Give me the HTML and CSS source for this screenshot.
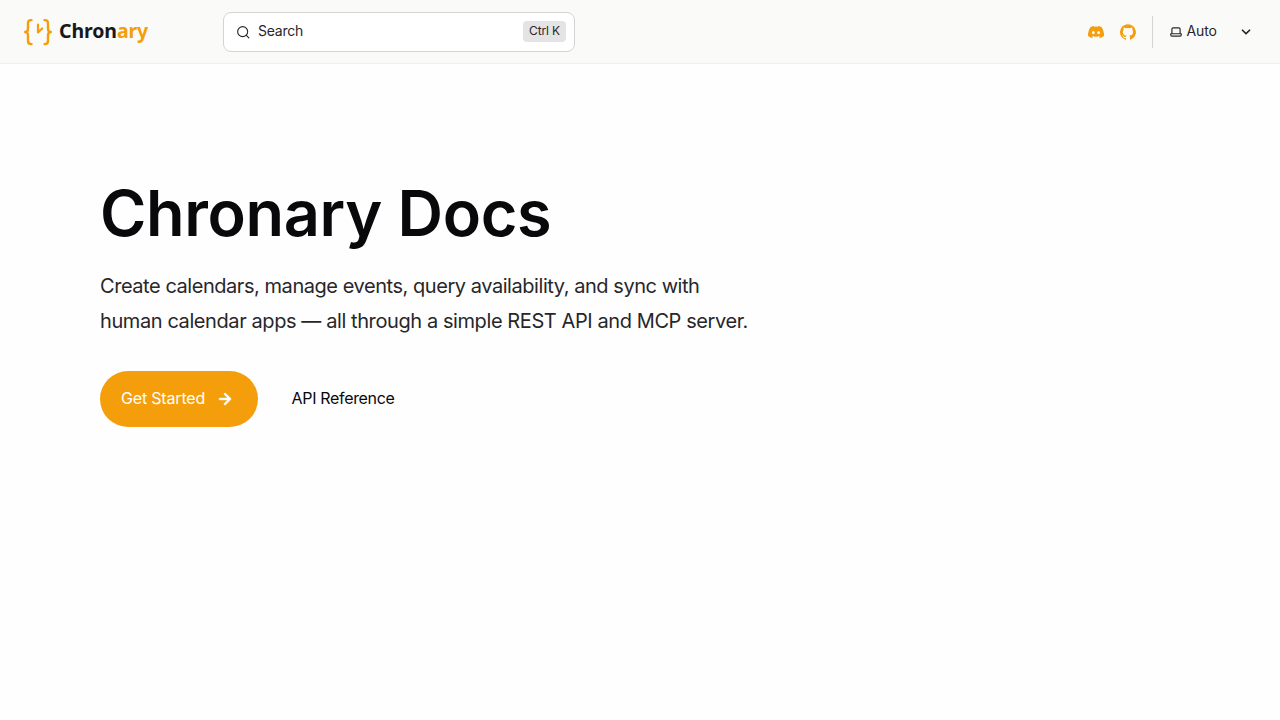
FILE: index.html
```html
<!DOCTYPE html>
<html lang="en">
<head>
    <meta charset="UTF-8">
    <meta name="viewport" content="width=device-width, initial-scale=1.0">
    <title>Chronary Docs</title>
    <link rel="stylesheet" href="styles.css">
</head>
<body>
    <header class="header">
        <a class="site-title" href="#">
            <svg class="logo" width="28" height="28" viewBox="0 0 28 28" fill="none" stroke="currentColor" stroke-width="2.4" stroke-linecap="round" stroke-linejoin="round">
                <path d="M7.500 2.100H7C4.900 2.100 4 3.300 4 5.200v5.300c0 2-.9 3.500-2.900 3.500 2 0 2.900 1.500 2.900 3.500v5.300C4 24.700 4.900 26.100 7 26.100h.5"/>
                <path d="M20.500 2.100h.5c2.100 0 3 1.200 3 3.100v5.300c0 2 .9 3.500 2.900 3.500-2 0-2.900 1.500-2.900 3.500v5.300c0 1.900-.9 3.300-3 3.300h-.5"/>
                <path d="M14 6.500v8l4.200-4" stroke-width="2.200"/>
            </svg>
            <span class="wordmark">Chron<span>ary</span></span>
        </a>

        <button class="search">
            <svg width="16" height="16" viewBox="0 0 24 24" fill="none" stroke="currentColor" stroke-width="1.700" stroke-linecap="round"><circle cx="11.500" cy="11.500" r="7.500"/><path d="m17 17 3.800 3.800"/></svg>
            <span class="search-label">Search</span>
            <kbd>Ctrl K</kbd>
        </button>

        <div class="right-group">
            <div class="social">
                <a href="#" aria-label="Discord">
                    <svg width="16" height="16" viewBox="0 0 24 24" fill="currentColor"><path d="M20.320 4.370a19.800 19.800 0 0 0-4.930-1.510 13.780 13.780 0 0 0-.64 1.280 18.270 18.270 0 0 0-5.500 0 12.640 12.640 0 0 0-.64-1.280A19.740 19.740 0 0 0 3.640 4.400 20.260 20.260 0 0 0 .11 18.090a19.900 19.900 0 0 0 6.060 3.050 14.240 14.240 0 0 0 1.270-2.050 13.100 13.100 0 0 1-1.930-1l.45-.38a14.200 14.200 0 0 0 12.120 0l.45.38a12.290 12.290 0 0 1-1.930 1c.36.7.78 1.400 1.250 2.050a19.840 19.840 0 0 0 6.070-3.050 20.100 20.100 0 0 0-3.600-13.720ZM8.020 15.330c-1.180 0-2.160-1.080-2.160-2.420s.96-2.420 2.160-2.420c1.210 0 2.180 1.100 2.160 2.420 0 1.340-.96 2.420-2.160 2.420Zm7.980 0c-1.190 0-2.160-1.080-2.160-2.420s.95-2.420 2.160-2.420 2.180 1.100 2.160 2.420c0 1.340-.95 2.420-2.160 2.420Z"/></svg>
                </a>
                <a href="#" aria-label="GitHub">
                    <svg width="16" height="16" viewBox="0 0 24 24" fill="currentColor"><path d="M12 .3a12 12 0 0 0-3.800 23.380c.6.12.83-.26.83-.57L9 21.070c-3.340.72-4.040-1.610-4.040-1.610-.55-1.390-1.340-1.760-1.340-1.760-1.080-.74.09-.73.09-.73 1.200.09 1.830 1.240 1.830 1.240 1.080 1.830 2.810 1.300 3.500 1 .1-.78.42-1.310.76-1.610-2.670-.3-5.470-1.330-5.470-5.930 0-1.310.47-2.380 1.240-3.220-.14-.3-.54-1.520.1-3.180 0 0 1-.32 3.300 1.230a11.500 11.500 0 0 1 6 0c2.280-1.550 3.290-1.230 3.290-1.230.64 1.660.24 2.880.12 3.180a4.650 4.650 0 0 1 1.230 3.220c0 4.610-2.800 5.630-5.480 5.920.42.36.81 1.100.81 2.220l-.01 3.290c0 .31.2.69.82.57A12 12 0 0 0 12 .3Z"/></svg>
                </a>
            </div>
            <button class="theme">
                <svg width="14" height="14" viewBox="0 0 24 24" fill="currentColor"><path d="M21 14h-1V7a3 3 0 0 0-3-3H7a3 3 0 0 0-3 3v7H3a1 1 0 0 0-1 1v2a3 3 0 0 0 3 3h14a3 3 0 0 0 3-3v-2a1 1 0 0 0-1-1ZM6 7a1 1 0 0 1 1-1h10a1 1 0 0 1 1 1v7H6V7Zm14 10a1 1 0 0 1-1 1H5a1 1 0 0 1-1-1v-1h16v1Z"/></svg>
                <span class="theme-label">Auto</span>
                <svg width="20" height="20" viewBox="0 0 24 24" fill="currentColor"><path d="M17 9.170a1 1 0 0 0-1.410 0L12 12.710 8.460 9.170a1 1 0 1 0-1.410 1.420l4.240 4.240a1 1 0 0 0 1.420 0L17 10.590a1 1 0 0 0 0-1.420Z"/></svg>
            </button>
        </div>
    </header>

    <main class="hero">
        <h1>Chronary Docs</h1>
        <p class="tagline">
            <span class="line-one">Create calendars, manage events, query availability, and sync with</span><br>
            <span class="line-two">human calendar apps — all through a simple REST API and MCP server.</span>
        </p>
        <div class="actions">
            <a class="button primary" href="#">
                <span class="button-label">Get Started</span>
                <svg width="24" height="24" viewBox="0 0 24 24" fill="currentColor" stroke="currentColor" stroke-width=".4"><path d="M17.920 11.620a1 1 0 0 0-.21-.33l-5-5a1 1 0 1 0-1.420 1.420l3.300 3.290H7a1 1 0 0 0 0 2h7.590l-3.300 3.290a1 1 0 0 0 .325 1.640 1 1 0 0 0 1.095-.22l5-5a1 1 0 0 0 .21-.33 1 1 0 0 0 0-.76Z"/></svg>
            </a>
            <a class="button minimal" href="#"><span class="button-label">API Reference</span></a>
        </div>
    </main>
</body>
</html>
```
FILE: styles.css
```css
* {
    box-sizing: border-box;
}

body {
    margin: 0;
    background: #fefefe;
    color: #27272a;
    font-family: Inter, "Liberation Sans", sans-serif;
}

a {
    color: inherit;
    text-decoration: none;
}

button {
    border: 0;
    background: none;
    color: inherit;
    font: inherit;
    cursor: pointer;
}

svg {
    display: block;
    flex-shrink: 0;
}

.header {
    display: flex;
    align-items: center;
    height: 64px;
    padding: 0 24px;
    background: #fafaf8;
    border-bottom: 1px solid #f0f0ee;
}

/* logo */
.site-title {
    display: flex;
    align-items: center;
    gap: 7px;
    width: 199px;
}

.logo {
    color: #f59e0b;
}

.wordmark {
    margin-bottom: 2px;
    font-family: "Noto Sans", sans-serif;
    font-size: 19.5px;
    font-weight: 700;
    line-height: 28px;
    letter-spacing: -0.1px;
    color: #18181b;
}

.wordmark span {
    color: #f59e0b;
}

/* search box */
.search {
    display: flex;
    align-items: center;
    width: 352px;
    height: 40px;
    padding: 0 8px 0 11px;
    border: 1px solid #d4d4d4;
    border-radius: 8px;
    background: #fff;
    font-size: 14px;
}

.search-label {
    margin: 0 auto 2px 7px;
    letter-spacing: -0.25px;
}

.search kbd {
    height: 21px;
    margin-bottom: 1px;
    padding: 0 6px;
    border-radius: 4px;
    background: #e4e4e7;
    font-family: inherit;
    font-size: 12px;
    line-height: 20px;
    letter-spacing: -0.13px;
}

.right-group {
    display: flex;
    align-items: center;
    margin-left: auto;
}

.social {
    display: flex;
    align-items: center;
    gap: 16px;
    height: 32px;
    padding-right: 16px;
    border-right: 1px solid #d4d4d4;
    color: #f59e0b;
}

.theme {
    display: flex;
    align-items: center;
    width: 103px;
    padding: 0 0 0 16px;
    font-size: 14px;
}

.theme-label {
    margin: 0 auto 2px 3.5px;
    letter-spacing: -0.15px;
}

/* hero */
.hero {
    padding: 114px 100px 0;
}

h1 {
    margin: 0;
    color: #09090b;
    font-size: 63px;
    font-weight: 600;
    line-height: 70px;
    letter-spacing: -0.35px;
}

.tagline {
    margin: 21px 0 32px;
    font-size: 20px;
    line-height: 35px;
    white-space: nowrap;
}

.line-one {
    letter-spacing: -0.45px;
}

.line-two {
    letter-spacing: -0.41px;
}

.actions {
    display: flex;
    align-items: center;
    gap: 13px;
}

.button {
    display: flex;
    align-items: center;
    height: 56px;
    padding: 0 21px;
    border-radius: 28px;
    font-size: 16px;
}

.button-label {
    margin-bottom: 2px;
}

.primary {
    gap: 8px;
    background: #f59e0b;
    color: #fff;
    letter-spacing: -0.18px;
}

.minimal {
    padding-left: 20.5px;
    color: #09090b;
    letter-spacing: -0.33px;
}
```
